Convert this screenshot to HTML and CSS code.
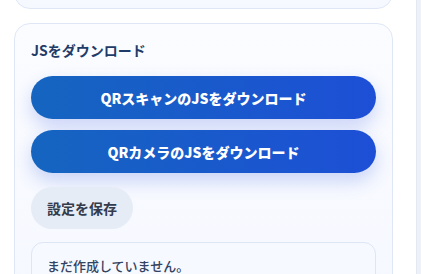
FILE: index.html
```html
<!DOCTYPE html>
<html lang="ja">
<head>
    <meta charset="UTF-8">
    <meta name="viewport" content="width=device-width, initial-scale=1.0">
    <title>QR設定</title>
    <link rel="stylesheet" href="styles.css">
</head>
<body>

<div class="page">
    <main class="content">
        <section class="card card-prev"></section>

        <section class="card">
            <h2 class="card-title">JSをダウンロード</h2>
            <div class="actions">
                <button class="button-primary">QRスキャンのJSをダウンロード</button>
                <button class="button-primary">QRカメラのJSをダウンロード</button>
            </div>
            <button class="button-save">設定を保存</button>
            <div class="status">まだ作成していません。</div>
        </section>
    </main>
    <div class="side-edge"></div>
</div>

</body>
</html>
```

FILE: styles.css
```css
body {
    font-family: "Noto Sans CJK JP", "Noto Sans", sans-serif;
    margin: 0;
    background-color: #fff;
    color: #334155;
    overflow: hidden;
}
.page {
    display: flex;
    height: 274px;
    overflow: hidden;
}
.content {
    width: 379px;
    padding-left: 14px;
    padding-right: 23px;
}
.side-edge {
    width: 4px;
    border-left: 1px solid #e3e8f1;
    background-color: #eef1f7;
}
.card {
    background: linear-gradient(180deg, #fbfcff 0%, #f5f8ff 100%);
    border: 1px solid #dfe7f6;
    border-radius: 16px;
    padding: 16px 16px 20px;
    margin-bottom: 14px;
}
.card-prev {
    height: 40px;
    margin-top: -33px;
    padding: 0;
}
.card-title {
    font-size: 14px;
    font-weight: 700;
    line-height: 20px;
    color: #1f3b68;
    margin: 0 0 16px;
}
.actions {
    display: flex;
    flex-direction: column;
    gap: 11px;
    margin-bottom: 14px;
}
button {
    font-family: inherit;
    font-size: 14px;
    font-weight: 700;
    border: none;
    cursor: pointer;
}
.button-primary {
    height: 43px;
    border-radius: 22px;
    color: #fff;
    font-weight: 900;
    background: linear-gradient(90deg, #1565c0 0%, #1d4fd6 100%);
    box-shadow: 0 8px 18px rgba(37, 76, 220, 0.22);
}
.button-save {
    height: 42px;
    padding: 0 16px;
    border-radius: 21px;
    background-color: #e6ecf5;
    color: #333b4c;
    margin-bottom: 13px;
}
.status {
    border: 1px solid #dce6f5;
    border-radius: 12px;
    background-color: #f6f9ff;
    padding: 13px 15px;
    font-size: 13px;
    font-weight: 500;
    line-height: 20px;
    color: #334361;
}
```
